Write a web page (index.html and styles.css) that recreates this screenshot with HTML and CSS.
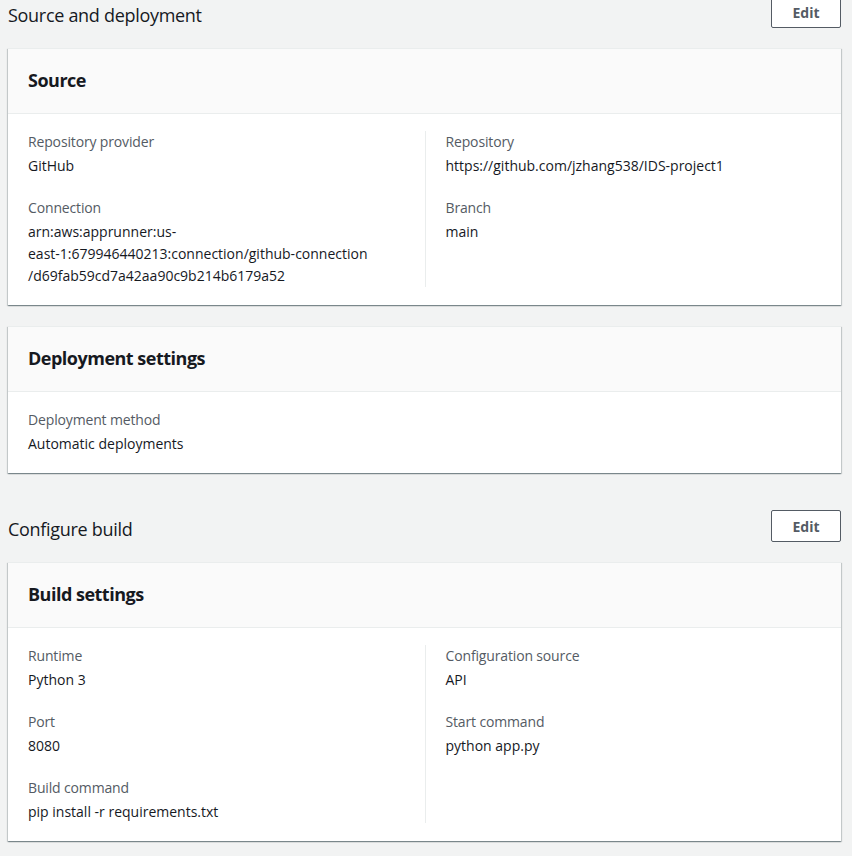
FILE: index.html
```html
<!DOCTYPE html>
<html lang="en">
<head>
<meta charset="utf-8">
<title>Source and deployment</title>
<link rel="stylesheet" href="styles.css">
</head>
<body>
<div class="page">
  <section class="section">
    <div class="section-header">
      <h2 class="section-title">Source and deployment</h2>
      <button class="btn" type="button">Edit</button>
    </div>
    <div class="card">
      <div class="card-header"><h3 class="card-title">Source</h3></div>
      <div class="card-body">
        <div class="cols">
          <div class="col">
            <div class="kv"><div class="label">Repository provider</div><div class="value">GitHub</div></div>
            <div class="kv"><div class="label">Connection</div><div class="value">arn:aws:apprunner:us-<br>east-1:679946440213:connection/github-connection<br>/d69fab59cd7a42aa90c9b214b6179a52</div></div>
          </div>
          <div class="col col-right">
            <div class="kv"><div class="label">Repository</div><div class="value">https://github.com/jzhang538/IDS-project1</div></div>
            <div class="kv"><div class="label">Branch</div><div class="value">main</div></div>
          </div>
        </div>
      </div>
    </div>
    <div class="card">
      <div class="card-header"><h3 class="card-title">Deployment settings</h3></div>
      <div class="card-body">
        <div class="kv"><div class="label">Deployment method</div><div class="value">Automatic deployments</div></div>
      </div>
    </div>
  </section>
  <section class="section">
    <div class="section-header">
      <h2 class="section-title">Configure build</h2>
      <button class="btn" type="button">Edit</button>
    </div>
    <div class="card">
      <div class="card-header"><h3 class="card-title">Build settings</h3></div>
      <div class="card-body">
        <div class="cols">
          <div class="col">
            <div class="kv"><div class="label">Runtime</div><div class="value">Python 3</div></div>
            <div class="kv"><div class="label">Port</div><div class="value">8080</div></div>
            <div class="kv"><div class="label">Build command</div><div class="value">pip install -r requirements.txt</div></div>
          </div>
          <div class="col col-right">
            <div class="kv"><div class="label">Configuration source</div><div class="value">API</div></div>
            <div class="kv"><div class="label">Start command</div><div class="value">python app.py</div></div>
          </div>
        </div>
      </div>
    </div>
  </section>
</div>
</body>
</html>
```
FILE: styles.css
```css
* { box-sizing: border-box; }
html, body { margin: 0; padding: 0; }
body {
  background: #f2f3f3;
  font-family: "Open Sans", "Noto Sans", Arial, sans-serif;
  font-size: 14px;
  line-height: 22px;
  color: #16191f;
  overflow: hidden;
}
.page {
  margin: -4px 11px 0 8px;
}
.section { margin-bottom: 37px; }
.section-header {
  display: flex;
  align-items: center;
  justify-content: space-between;
  margin-bottom: 20px;
}
.section-title {
  margin: 0;
  padding-top: 6px;
  font-size: 18px;
  line-height: 22px;
  font-weight: 400;
  letter-spacing: -0.3px;
  color: #16191f;
}
.btn {
  width: 70px;
  height: 32px;
  background: #fff;
  border: 1px solid #545b64;
  border-radius: 2px;
  color: #545b64;
  font-family: inherit;
  font-size: 14px;
  font-weight: 700;
  padding: 0;
}
.card {
  background: #fff;
  border-top: 1px solid #eaeded;
  box-shadow: 0 1px 1px 0 rgba(0,28,36,.3), 1px 1px 1px 0 rgba(0,28,36,.15), -1px 1px 1px 0 rgba(0,28,36,.15);
  margin-bottom: 21px;
}
.card:last-child { margin-bottom: 0; }
.card-header {
  background: #fafafa;
  border-bottom: 1px solid #eaeded;
  height: 65px;
  padding: 0 20px 2px;
  display: flex;
  align-items: center;
}
.card-title {
  margin: 0;
  font-size: 18px;
  line-height: 22px;
  font-weight: 700;
  letter-spacing: -0.5px;
  color: #16191f;
}
.card-body {
  padding: 17px 20px 18px;
}
.cols {
  display: grid;
  grid-template-columns: 1fr 1fr;
}
.col-right {
  border-left: 1px solid #eaeded;
  padding-left: 20px;
}
.kv + .kv { margin-top: 20px; }
.label { color: #545b64; line-height: 22px; margin-bottom: 2px; letter-spacing: -0.15px; }
.value { color: #16191f; line-height: 22px; }
```
